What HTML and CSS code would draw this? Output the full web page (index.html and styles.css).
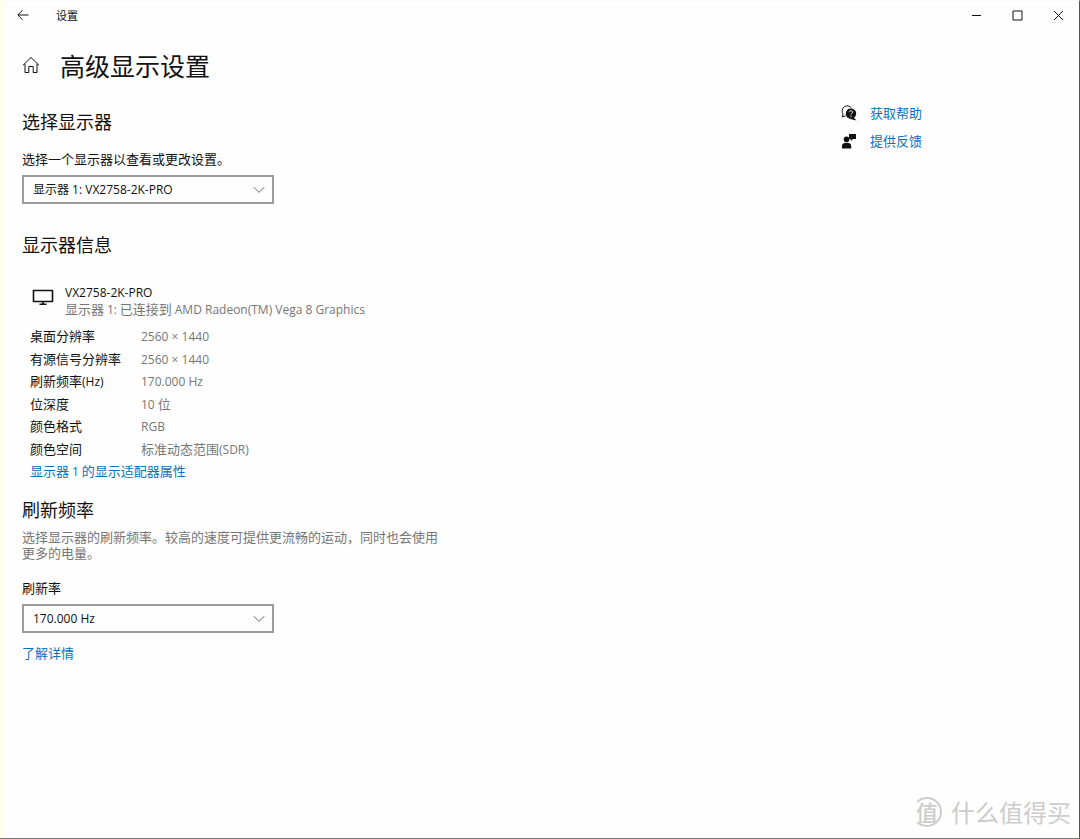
FILE: index.html
```html
<!DOCTYPE html>
<html lang="zh-CN">
<head>
<meta charset="utf-8">
<meta name="viewport" content="width=device-width, initial-scale=1">
<title>设置</title>
<link rel="stylesheet" href="styles.css">
</head>
<body>
<div class="window">
  <header class="titlebar">
    <button class="bar-button back" type="button" aria-label="返回">
      <svg width="12" height="12" viewBox="0 0 12 12"><path d="M11.5 6H1M5.5 1.3L.8 6l4.7 4.7"/></svg>
    </button>
    <span class="app-name">设置</span>
    <div class="window-controls">
      <button class="bar-button" type="button" aria-label="最小化">
        <svg width="11" height="11" viewBox="0 0 11 11"><path d="M1 5.500h9"/></svg>
      </button>
      <button class="bar-button" type="button" aria-label="最大化">
        <svg width="11" height="11" viewBox="0 0 11 11"><path d="M1 1h9v9H1z"/></svg>
      </button>
      <button class="bar-button" type="button" aria-label="关闭">
        <svg width="11" height="11" viewBox="0 0 11 11"><path d="M1 1l9 9M10 1l-9 9"/></svg>
      </button>
    </div>
  </header>

  <div class="page-head">
    <button class="home" type="button" aria-label="主页">
      <svg width="18" height="18" viewBox="0 0 18 18"><path d="M1 9.300L9 1.500l8 7.800M3 7.800v8.700h3.800v-6h4.400v6H15V7.800"/></svg>
    </button>
    <h1>高级显示设置</h1>
  </div>

  <div class="columns">
    <main class="content">
      <section class="choose">
        <h2>选择显示器</h2>
        <label class="caption" for="display">选择一个显示器以查看或更改设置。</label>
        <div class="dropdown">
          <select id="display"><option>显示器 1: VX2758-2K-PRO</option></select>
          <svg class="chevron" width="12" height="8" viewBox="0 0 12 8"><path d="M.8 1.200L6 6.400l5.200-5.200"/></svg>
        </div>
      </section>

      <section class="info">
        <h2>显示器信息</h2>
        <div class="device">
          <svg width="22" height="18" viewBox="0 0 22 18"><path d="M1.500 2.500h19v11h-19zM11 13.500v2.700M7.500 16.200h7"/></svg>
          <div class="device-text">
            <div class="latin">VX2758-2K-PRO</div>
            <div class="muted">显示器 <span class="latin">1:</span> 已连接到 <span class="latin">AMD Radeon(TM) Vega 8 Graphics</span></div>
          </div>
        </div>
        <table class="specs">
          <tr><th scope="row">桌面分辨率</th><td><span class="latin">2560 × 1440</span></td></tr>
          <tr><th scope="row">有源信号分辨率</th><td><span class="latin">2560 × 1440</span></td></tr>
          <tr><th scope="row">刷新频率<span class="latin">(Hz)</span></th><td><span class="latin">170.000 Hz</span></td></tr>
          <tr><th scope="row">位深度</th><td><span class="latin">10</span> 位</td></tr>
          <tr><th scope="row">颜色格式</th><td><span class="latin">RGB</span></td></tr>
          <tr><th scope="row">颜色空间</th><td>标准动态范围<span class="latin">(SDR)</span></td></tr>
        </table>
        <a class="adapter" href="#adapter">显示器 <span class="latin">1</span> 的显示适配器属性</a>
      </section>

      <section class="refresh">
        <h2>刷新频率</h2>
        <p class="muted">选择显示器的刷新频率。较高的速度可提供更流畅的运动，同时也会使用更多的电量。</p>
        <label class="caption" for="rate">刷新率</label>
        <div class="dropdown">
          <select id="rate"><option>170.000 Hz</option></select>
          <svg class="chevron" width="12" height="8" viewBox="0 0 12 8"><path d="M.8 1.200L6 6.400l5.200-5.200"/></svg>
        </div>
        <a class="more" href="#more">了解详情</a>
      </section>
    </main>

    <aside class="support">
      <a href="#help">
        <svg width="16" height="16" viewBox="0 0 16 16"><path class="line" d="M4.500 10.800l-3.300 1.200.9-2.800A5 5 0 1 1 10.600 3"/><path class="solid" d="M10 3.400a5.200 5.200 0 1 1-1 10.300 5.200 5.200 0 0 1 1-10.300zM12 12l3.600 3.400-5.600-1.200z"/><path class="mark" d="M8.400 7.200c.1-2 3.300-1.900 3.200 0 0 1-1.600 1.200-1.600 2.400M10 10.700v1.200"/></svg>
        <span>获取帮助</span>
      </a>
      <a href="#feedback">
        <svg width="16" height="16" viewBox="0 0 16 16"><circle class="solid" cx="5.500" cy="6.400" r="2.800"/><path class="solid" d="M1 15.500v-2.200C1 10.900 2.300 10 4 10h3.200c1.800 0 3 .9 3 3.300v2.200zM8 1h7v5h-2.800l-2.400 2V6H8z"/></svg>
        <span>提供反馈</span>
      </a>
    </aside>
  </div>

  <div class="watermark">
    <span class="seal">值</span>
    <span>什么值得买</span>
  </div>
</div>
</body>
</html>
```
FILE: styles.css
```css
* {
  box-sizing: border-box;
}

body {
  margin: 0;
  background: #fefefe;
  color: #111;
  font: 13px/16px "Noto Sans CJK SC", sans-serif;
}

h1,
h2,
p {
  margin: 0;
  font-weight: 400;
}

button {
  padding: 0;
  border: 0;
  background: none;
}

svg {
  display: block;
  flex: none;
  fill: none;
  stroke: #111;
}

a {
  color: #0b72b9;
  text-decoration: none;
}

.window {
  position: relative;
  min-height: 100vh;
  border-top: 1px solid #fdfaf2;
  border-right: 1px solid #5b5547;
  border-bottom: 1px solid #7a7870;
  background: linear-gradient(to right, #fffee6, #fefefe 6px);
}

.latin {
  font-family: "Open Sans", "Noto Sans CJK SC", sans-serif;
  font-size: 12px;
}

span.latin {
  line-height: 1;
}

.muted {
  color: #767676;
}

.titlebar {
  display: flex;
  align-items: center;
  height: 28px;
}

.bar-button {
  display: grid;
  place-items: center;
  width: 41px;
  height: 28px;
}

.back {
  width: 45px;
}

.app-name {
  padding-left: 11px;
  font-size: 11px;
}

.window-controls {
  display: flex;
  margin-left: auto;
}

.page-head {
  display: flex;
  align-items: center;
  gap: 20px;
  padding: 18px 22px 0;
}

h1 {
  font-size: 25px;
  line-height: 36px;
}

.columns {
  display: grid;
  grid-template-columns: minmax(0, 1fr) 239px;
  padding-top: 20px;
}

.content {
  max-width: 442px;
  padding-left: 22px;
}

h2 {
  font-size: 18px;
  line-height: 36px;
}

.caption {
  display: block;
}

.choose .caption {
  margin-top: 12px;
}

.dropdown {
  position: relative;
  width: 252px;
  margin-top: 8px;
}

select {
  display: block;
  width: 100%;
  height: 29px;
  padding: 0 30px 0 9px;
  border: 2px solid #9c9c9c;
  border-radius: 0;
  appearance: none;
  background: #fefefe;
  color: #111;
  font: 12px/24px "Open Sans", "Noto Sans CJK SC", sans-serif;
}

.chevron {
  position: absolute;
  top: 11px;
  right: 9px;
  stroke: #666;
  pointer-events: none;
}

.info {
  margin-top: 22px;
}

.device {
  display: flex;
  gap: 11px;
  padding: 23px 0 0 10px;
}

.device > svg {
  margin-top: 3px;
  stroke-width: 1.6;
}

.device-text {
  white-space: nowrap;
}

.specs {
  margin: 8px 0 0 8px;
  border-collapse: collapse;
  line-height: 22px;
}

.specs tr:nth-child(even) {
  line-height: 23px;
}

.specs th {
  width: 111px;
  padding: 0;
  font-weight: 400;
  text-align: left;
  vertical-align: baseline;
}

.specs td {
  padding: 0;
  color: #767676;
  vertical-align: baseline;
}

.adapter {
  display: block;
  padding-left: 8px;
  line-height: 22px;
}

.refresh {
  margin-top: 9px;
}

.refresh .muted {
  margin-top: 2px;
}

.refresh .caption {
  margin-top: 19px;
}

.more {
  display: inline-block;
  margin-top: 12px;
}

.support {
  display: flex;
  flex-direction: column;
  align-items: flex-start;
  gap: 12px;
  padding: 2px 0 0 1px;
}

.support a {
  display: flex;
  gap: 13px;
}

.support .solid {
  fill: #111;
  stroke: none;
}

.support .mark {
  stroke: #fff;
}

.watermark {
  position: absolute;
  right: 8px;
  bottom: 10px;
  display: flex;
  align-items: center;
  gap: 9px;
  color: #ccc;
  font-size: 24px;
  line-height: 32px;
}

.seal {
  width: 30px;
  height: 30px;
  border: 2px solid #ccc;
  border-left-color: transparent;
  border-radius: 50%;
  font-size: 22px;
  font-weight: 500;
  line-height: 24px;
  text-align: center;
}
```
